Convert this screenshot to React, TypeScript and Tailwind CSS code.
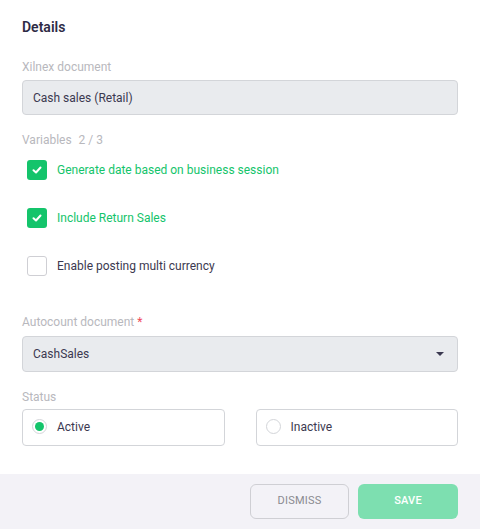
export default function App() {
  const font = { fontFamily: "Roboto, 'Liberation Sans', sans-serif" };

  const Check = ({ checked, label }: { checked: boolean; label: string }) => (
    <div className="flex items-center h-[20px] pl-[5px]">
      {checked ? (
        <span className="w-[20px] h-[20px] rounded-[3px] bg-[#14c46b] flex items-center justify-center">
          <svg width="12" height="12" viewBox="0 0 12 12" fill="none">
            <path d="M2.5 6.2 L5 8.5 L9.5 3.5" stroke="white" strokeWidth="2" strokeLinecap="round" strokeLinejoin="round" />
          </svg>
        </span>
      ) : (
        <span className="w-[20px] h-[20px] rounded-[3px] border border-[#cfcfd4] bg-white" />
      )}
      <span className={`ml-[10px] text-[12px] ${checked ? "text-[#14c46b]" : "text-[#3b3950]"}`}>{label}</span>
    </div>
  );

  return (
    <div className="w-[480px] h-[529px] bg-white flex flex-col text-[#3b3950]" style={font}>
      <div className="flex-1 px-[22px] pt-[17px]">
        <h2 className="text-[14px] font-semibold text-[#2e2b45] leading-[20px]">Details</h2>

        <div className="mt-[22px] text-[12px] text-[#b8b8bd] leading-[16px]">Xilnex document</div>
        <div className="mt-[5px] h-[35px] rounded-[4px] border border-[#d3d5d9] bg-[#e9ebee] flex items-center px-[10px] text-[12px] text-[#3b3950]">
          Cash sales (Retail)
        </div>

        <div className="mt-[17px] text-[12px] text-[#b8b8bd] leading-[16px]">
          Variables <span className="ml-[4px]">2 / 3</span>
        </div>
        <div className="mt-[12px] flex flex-col gap-[28px]">
          <Check checked label="Generate date based on business session" />
          <Check checked label="Include Return Sales" />
          <Check checked={false} label="Enable posting multi currency" />
        </div>

        <div className="mt-[38px] text-[12px] text-[#b8b8bd] leading-[16px]">
          Autocount document <span className="text-[#ef4a5a]">*</span>
        </div>
        <div className="mt-[6px] h-[36px] rounded-[4px] border border-[#d3d5d9] bg-[#e9ebee] flex items-center justify-between px-[10px] text-[12px] text-[#3b3950]">
          <span>CashSales</span>
          <svg width="10" height="6" viewBox="0 0 10 6" className="mr-[2px]">
            <path d="M1 1 L9 1 L5 5 Z" fill="#3b3950" />
          </svg>
        </div>

        <div className="mt-[17px] text-[12px] text-[#b8b8bd] leading-[16px]">Status</div>
        <div className="mt-[4px] grid grid-cols-2 gap-[31px]">
          <div className="h-[37px] rounded-[4px] border border-[#d3d5d9] flex items-center pl-[9px] pb-[2px]">
            <span className="w-[15px] h-[15px] rounded-full border border-[#d3d5d9] flex items-center justify-center">
              <span className="w-[9px] h-[9px] rounded-full bg-[#14c46b]" />
            </span>
            <span className="ml-[10px] text-[12px]">Active</span>
          </div>
          <div className="h-[37px] rounded-[4px] border border-[#d3d5d9] flex items-center pl-[9px] pb-[2px]">
            <span className="w-[15px] h-[15px] rounded-full border border-[#d3d5d9]" />
            <span className="ml-[10px] text-[12px]">Inactive</span>
          </div>
        </div>
      </div>

      <div className="h-[55px] bg-[#f3f2f7] flex items-center justify-end gap-[9px] px-[22px]">
        <button className="w-[99px] h-[35px] rounded-[6px] border border-[#cfcfd4] text-[11px] text-[#8a8a90] tracking-[0.2px]">DISMISS</button>
        <button className="w-[100px] h-[35px] rounded-[6px] bg-[#7ddfb0] text-[11px] text-white font-medium tracking-[0.2px]">SAVE</button>
      </div>
    </div>
  );
}
